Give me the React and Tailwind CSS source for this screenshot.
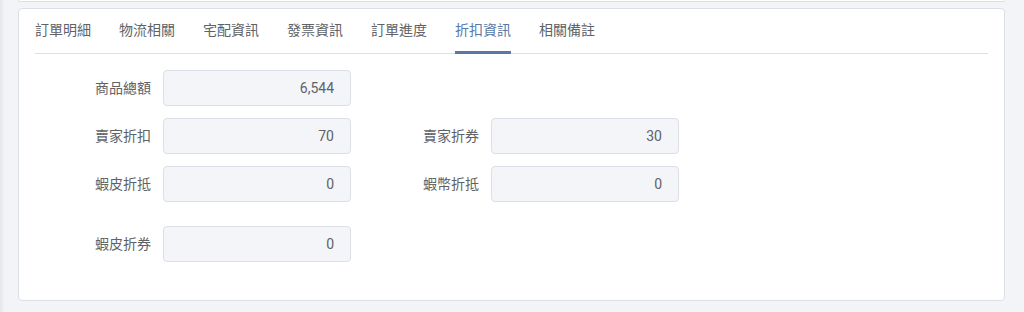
const tabs = ['訂單明細', '物流相關', '宅配資訊', '發票資訊', '訂單進度', '折扣資訊', '相關備註'];

const rows = [
  [{ label: '商品總額', value: '6,544' }, null],
  [{ label: '賣家折扣', value: '70' }, { label: '賣家折券', value: '30' }],
  [{ label: '蝦皮折抵', value: '0' }, { label: '蝦幣折抵', value: '0' }],
  [{ label: '蝦皮折券', value: '0' }, null],
];

function Field({ field }) {
  if (!field) return <div />;
  return (
    <div className="flex items-center">
      <label className="w-[116px] text-right text-[14px] text-[#606266]">{field.label}</label>
      <div className="ml-3 flex h-[36px] w-[188px] items-center justify-end rounded-[4px] border border-[#dcdfe6] bg-[#f4f5f9] pr-4 text-[14px] text-[#606266]">
        {field.value}
      </div>
    </div>
  );
}

export default function App() {
  return (
    <div
      className="relative h-[312px] w-[1024px] overflow-hidden bg-[#f3f4f8]"
      style={{ fontFamily: 'Roboto, "Noto Sans CJK TC", sans-serif' }}
    >
      {/* left shadow strip */}
      <div className="absolute left-0 top-0 h-full w-[5px] bg-gradient-to-r from-[#e6e7ea] to-transparent" />

      {/* bottom edge of card above */}
      <div className="ml-[18px] h-[2px] w-[987px] rounded-b-[4px] border-b border-x border-[#dcdfe6] bg-white" />

      <div className="ml-[18px] mt-[6px] h-[293px] w-[987px] rounded-[4px] border border-[#dcdfe6] bg-white px-[16px]">
        {/* tabs */}
        <div className="flex border-b border-[#dcdfe6]">
          {tabs.map((t) => {
            const active = t === '折扣資訊';
            return (
              <div
                key={t}
                className={
                  active
                    ? 'mr-7 -mb-px flex h-[45px] items-center border-b-[3px] border-[#5a79a6] pt-[1px] text-[14px] text-[#5a79a6]'
                    : 'mr-7 -mb-px flex h-[45px] items-center border-b-[3px] border-transparent pt-[1px] text-[14px] text-[#606266]'
                }
              >
                {t}
              </div>
            );
          })}
        </div>

        {/* discount fields */}
        <div className="mt-[16px] flex flex-col">
          {rows.map((r, i) => (
            <div
              key={i}
              className={i === 3 ? 'mt-[24px] grid grid-cols-[328px_328px]' : i > 0 ? 'mt-[12px] grid grid-cols-[328px_328px]' : 'grid grid-cols-[328px_328px]'}
            >
              <Field field={r[0]} />
              <Field field={r[1]} />
            </div>
          ))}
        </div>
      </div>
    </div>
  );
}
